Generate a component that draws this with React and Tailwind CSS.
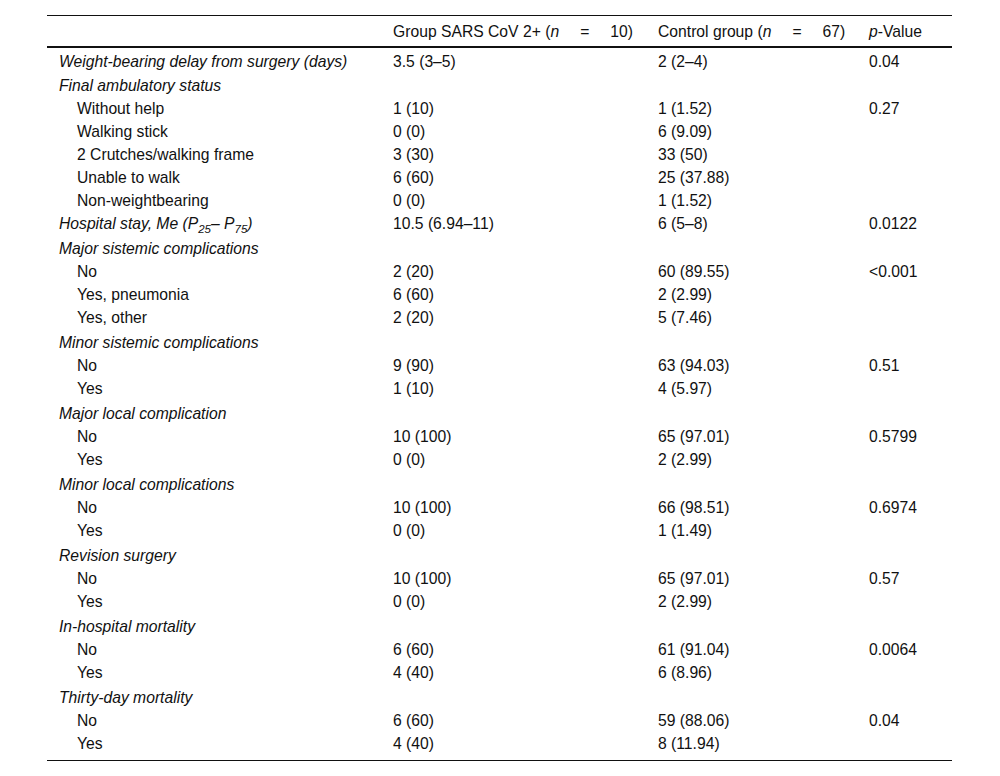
const rows = [
  { label: "Weight-bearing delay from surgery (days)", head: true, first: true, a: "3.5 (3–5)", b: "2 (2–4)", p: "0.04" },
  { label: "Final ambulatory status", head: true, tight: true },
  { label: "Without help", a: "1 (10)", b: "1 (1.52)", p: "0.27" },
  { label: "Walking stick", a: "0 (0)", b: "6 (9.09)" },
  { label: "2 Crutches/walking frame", a: "3 (30)", b: "33 (50)" },
  { label: "Unable to walk", a: "6 (60)", b: "25 (37.88)" },
  { label: "Non-weightbearing", a: "0 (0)", b: "1 (1.52)" },
  { label: "hospital", head: true, tight: true, a: "10.5 (6.94–11)", b: "6 (5–8)", p: "0.0122" },
  { label: "Major sistemic complications", head: true },
  { label: "No", a: "2 (20)", b: "60 (89.55)", p: "<0.001" },
  { label: "Yes, pneumonia", a: "6 (60)", b: "2 (2.99)" },
  { label: "Yes, other", a: "2 (20)", b: "5 (7.46)" },
  { label: "Minor sistemic complications", head: true },
  { label: "No", a: "9 (90)", b: "63 (94.03)", p: "0.51" },
  { label: "Yes", a: "1 (10)", b: "4 (5.97)" },
  { label: "Major local complication", head: true },
  { label: "No", a: "10 (100)", b: "65 (97.01)", p: "0.5799" },
  { label: "Yes", a: "0 (0)", b: "2 (2.99)" },
  { label: "Minor local complications", head: true },
  { label: "No", a: "10 (100)", b: "66 (98.51)", p: "0.6974" },
  { label: "Yes", a: "0 (0)", b: "1 (1.49)" },
  { label: "Revision surgery", head: true },
  { label: "No", a: "10 (100)", b: "65 (97.01)", p: "0.57" },
  { label: "Yes", a: "0 (0)", b: "2 (2.99)" },
  { label: "In-hospital mortality", head: true },
  { label: "No", a: "6 (60)", b: "61 (91.04)", p: "0.0064" },
  { label: "Yes", a: "4 (40)", b: "6 (8.96)" },
  { label: "Thirty-day mortality", head: true },
  { label: "No", a: "6 (60)", b: "59 (88.06)", p: "0.04" },
  { label: "Yes", a: "4 (40)", b: "8 (11.94)" },
];

const cols = "grid grid-cols-[346px_265px_211px_1fr]";

function Label({ row }) {
  if (row.label === "hospital") {
    return (
      <span className="italic">
        Hospital stay, Me (P<sub className="text-[11.5px] bottom-[-4px]">25</sub>– P
        <sub className="text-[11.5px] bottom-[-4px]">75</sub>)
      </span>
    );
  }
  return <span className={row.head ? "italic" : ""}>{row.label}</span>;
}

function N({ value }) {
  return (
    <>
      (<span className="italic">n</span>
      <span className="inline-block ml-[21px] mr-[21px]">=</span>
      {value})
    </>
  );
}

function rowClass(row) {
  if (row.first) return "h-[26px] pt-[2px] pb-[1px]";
  if (row.head && !row.tight) return "h-[25px] pt-[2px]";
  return "h-[23px]";
}

export default function App() {
  return (
    <div
      className="bg-white w-[1000px] h-[776px] pt-[15px] pl-[47px] text-[15.7px] leading-[18px] text-[#111]"
      style={{ fontFamily: '"Liberation Sans", Arial, sans-serif' }}
    >
      <div className="w-[905px] border-t border-[#111] border-b border-b-[#111]">
        <div className={`${cols} h-[32px] pt-[2px] items-center border-b-2 border-[#111]`}>
          <div />
          <div>
            Group SARS CoV 2+ <N value="10" />
          </div>
          <div>
            Control group <N value="67" />
          </div>
          <div>
            <span className="italic">p</span>-Value
          </div>
        </div>
        <div className="pb-[5px]">
          {rows.map((row, i) => (
            <div key={i} className={`${cols} items-center ${rowClass(row)}`}>
              <div className={row.head ? "pl-[12px]" : "pl-[30px]"}>
                <Label row={row} />
              </div>
              <div>{row.a}</div>
              <div>{row.b}</div>
              <div>{row.p}</div>
            </div>
          ))}
        </div>
      </div>
    </div>
  );
}
